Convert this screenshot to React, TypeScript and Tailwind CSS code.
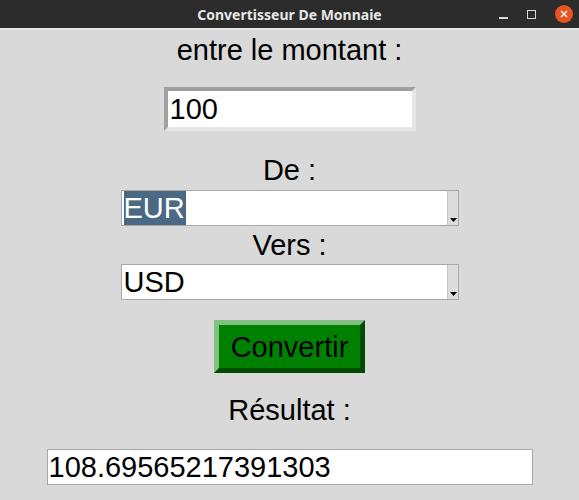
import React from "react";

function Combo({ value, selected }: { value: string; selected?: boolean }) {
  return (
    <div className="flex h-[36px] w-[338px] border border-[#a8a8a8] bg-white">
      <div className="flex flex-1 items-center pl-[2px]">
        <span
          className={
            selected
              ? "bg-[#4a6984] text-white leading-[34px] pr-[1px]"
              : "text-black leading-[34px]"
          }
        >
          {value}
        </span>
      </div>
      <div className="relative w-[11px] border-l border-[#c4c4c4] bg-[#dcdcdc]">
        <svg
          className="absolute left-[2px] bottom-[3px]"
          width="7"
          height="4"
          viewBox="0 0 7 4"
        >
          <polygon points="0,0 7,0 3.5,4" fill="#000" />
        </svg>
      </div>
    </div>
  );
}

export default function App() {
  return (
    <div
      className="w-[579px] h-[500px] overflow-hidden bg-[#d9d9d9] text-black"
      style={{ fontFamily: '"Liberation Sans", Arial, sans-serif' }}
    >
      {/* Title bar */}
      <div className="relative flex h-[30px] items-center justify-center bg-[#2c2c2c] border-b-2 border-[#e4e4e4]">
        <span
          className="text-[14px] font-bold text-[#e6e6e6]"
          style={{ fontFamily: '"Noto Sans", "DejaVu Sans", sans-serif' }}
        >
          Convertisseur De Monnaie
        </span>
        <div className="absolute right-[6px] top-0 flex h-full items-center gap-[19px]">
          <div className="mt-[8px] h-[2px] w-[9px] bg-[#d8d8d8]" />
          <div className="h-[9px] w-[9px] border-[1.5px] border-[#d8d8d8]" />
          <div className="flex h-[18px] w-[18px] items-center justify-center rounded-full bg-[#e95420]">
            <svg width="8" height="8" viewBox="0 0 8 8">
              <path d="M1 1 L7 7 M7 1 L1 7" stroke="#fff" strokeWidth="1.4" />
            </svg>
          </div>
        </div>
      </div>

      {/* Body */}
      <div className="flex flex-col items-center text-[29px]">
        <div className="mt-[4px] leading-[32px]">entre le montant :</div>

        <div className="mt-[21px] flex h-[44px] w-[252px] items-center border-[4px] border-t-[#a0a0a0] border-l-[#a0a0a0] border-b-[#e6e6e6] border-r-[#e6e6e6] bg-white pl-[2px]">
          <span className="leading-[36px]">100</span>
        </div>

        <div className="mt-[23px] leading-[32px]">De :</div>
        <div className="mt-[4px]">
          <Combo value="EUR" selected />
        </div>

        <div className="mt-[3px] leading-[32px]">Vers :</div>
        <div className="mt-[3px]">
          <Combo value="USD" />
        </div>

        <div className="mt-[20px] flex h-[53px] w-[151px] items-center justify-center border-[5px] border-t-[#80c080] border-l-[#80c080] border-b-[#004c00] border-r-[#004c00] bg-[#008000]">
          <span className="leading-[40px]">Convertir</span>
        </div>

        <div className="mt-[21px] leading-[32px]">Résultat :</div>

        <div className="mt-[23px] flex h-[36px] w-[486px] items-center border border-[#a8a8a8] bg-white pl-[1px]">
          <span className="leading-[34px]">108.69565217391303</span>
        </div>
      </div>
    </div>
  );
}
